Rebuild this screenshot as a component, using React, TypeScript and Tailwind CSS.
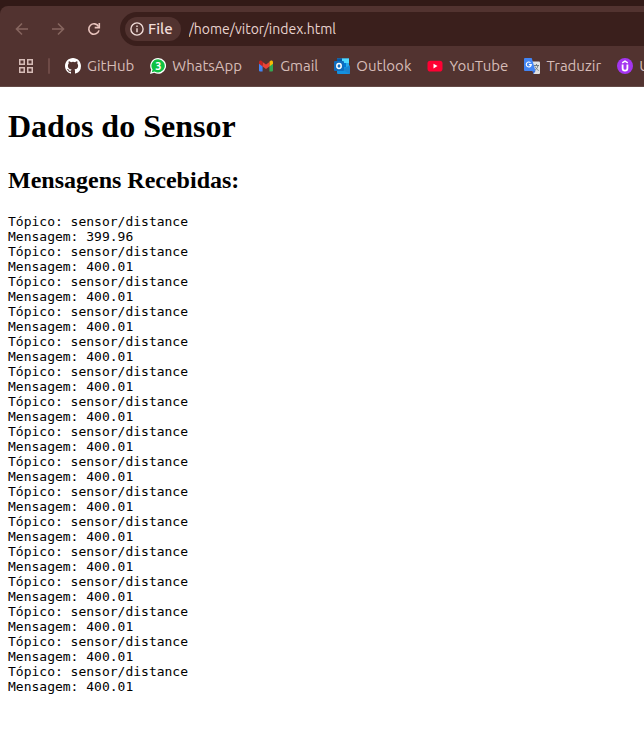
import type { ReactNode } from "react";

const readings = [
  "399.96",
  ...Array.from({ length: 15 }, () => "400.01"),
];

const log = readings
  .map((value) => `Tópico: sensor/distance\nMensagem: ${value}`)
  .join("\n");

function BackIcon() {
  return (
    <svg viewBox="0 0 16 16" className="size-4" fill="none" stroke="currentColor" strokeWidth="1.6" aria-hidden="true">
      <path d="M14 8H3M8 2.5 2.5 8 8 13.5" />
    </svg>
  );
}

function ForwardIcon() {
  return (
    <svg viewBox="0 0 16 16" className="size-4" fill="none" stroke="currentColor" strokeWidth="1.6" aria-hidden="true">
      <path d="M2 8h11M8 2.5 13.5 8 8 13.5" />
    </svg>
  );
}

function ReloadIcon() {
  return (
    <svg viewBox="0 0 16 16" className="size-4" fill="none" stroke="currentColor" strokeWidth="1.6" aria-hidden="true">
      <path d="M12.6 5.6A5.2 5.2 0 1 0 13 9.4" />
      <path d="M13.3 2v4.6H8.7" />
    </svg>
  );
}

function InfoIcon() {
  return (
    <svg viewBox="0 0 14 14" className="size-3.5" fill="none" stroke="currentColor" strokeWidth="1.4" aria-hidden="true">
      <circle cx="7" cy="7" r="6.1" />
      <path d="M7 6.2v4M7 3.6v1.5" />
    </svg>
  );
}

function AppsIcon() {
  return (
    <svg viewBox="0 0 14 14" className="size-3.5" fill="none" stroke="currentColor" strokeWidth="1.5" aria-hidden="true">
      <path d="M.75.75h4.5v4.5H.75zM8.75.75h4.5v4.5h-4.5zM.75 8.75h4.5v4.5H.75zM8.75 8.75h4.5v4.5h-4.5z" />
    </svg>
  );
}

function GitHubIcon() {
  return (
    <svg viewBox="0 0 16 16" className="size-4 shrink-0" fill="#ffffff" aria-hidden="true">
      <path d="M8 0C3.58 0 0 3.58 0 8c0 3.54 2.29 6.53 5.47 7.59.4.07.55-.17.55-.38 0-.19-.01-.82-.01-1.49-2.01.37-2.53-.49-2.69-.94-.09-.23-.48-.94-.82-1.13-.28-.15-.68-.52-.01-.53.63-.01 1.08.58 1.23.82.72 1.21 1.87.87 2.33.66.07-.52.28-.87.51-1.07-1.78-.2-3.64-.89-3.64-3.95 0-.87.31-1.59.82-2.15-.08-.2-.36-1.02.08-2.12 0 0 .67-.21 2.2.82a7.5 7.5 0 0 1 4 0c1.53-1.04 2.2-.82 2.2-.82.44 1.1.16 1.92.08 2.12.51.56.82 1.27.82 2.15 0 3.07-1.87 3.75-3.65 3.95.29.25.54.73.54 1.48 0 1.07-.01 1.93-.01 2.2 0 .21.15.46.55.38A8.01 8.01 0 0 0 16 8c0-4.42-3.58-8-8-8z" />
    </svg>
  );
}

function WhatsAppIcon() {
  return (
    <span className="relative flex size-4 shrink-0 items-center justify-center">
      <svg viewBox="0 0 16 16" className="absolute inset-0 size-4" aria-hidden="true">
        <path d="M8.1 0a7.9 7.9 0 1 1-3.8 14.8L0 16l1.2-4.2A7.9 7.9 0 0 1 8.1 0z" fill="#ffffff" />
        <path d="M8.1 1.3a6.6 6.6 0 1 1-3.6 12.1l-2.7.8.8-2.6A6.6 6.6 0 0 1 8.1 1.3z" fill="#0fc143" />
      </svg>
      <span className="relative text-[11px] leading-4 font-bold text-white">3</span>
    </span>
  );
}

function GmailIcon() {
  return (
    <svg viewBox="0 0 16 16" className="size-4 shrink-0" aria-hidden="true">
      <path d="M1 4.5 4.6 7v6.5H2.1A1.1 1.1 0 0 1 1 12.4z" fill="#4285f4" />
      <path d="M15 4.5 11.4 7v6.5h2.5a1.1 1.1 0 0 0 1.1-1.1z" fill="#34a853" />
      <path d="M11.4 3.7v4.8L15 5.8V4.2c0-1.5-1.6-2.2-2.7-1.3z" fill="#fbbc04" />
      <path d="M4.6 8.5V3.9L8 6.4l3.4-2.5v4.6L8 11z" fill="#ea4335" />
      <path d="M1 4.2v1.6l3.6 2.7V3.8l-.9-.9C2.6 2.1 1 2.7 1 4.2z" fill="#c5221f" />
    </svg>
  );
}

function OutlookIcon() {
  return (
    <svg viewBox="0 0 16 16" className="size-4 shrink-0" aria-hidden="true">
      <path d="M3 .5h12v8.5H3z" fill="#28a8ea" />
      <path d="M8 .5h7V5H8z" fill="#50d9ff" />
      <path d="M8 5h4v4H8z" fill="#0078d4" />
      <path d="M3 .5h5V5H3z" fill="#0358a7" />
      <path d="M3 9h9l4-1.5V15a1 1 0 0 1-1 1H4a1 1 0 0 1-1-1z" fill="#1490df" />
      <path d="m16 7.5-7 4.2L15.5 16 16 15z" fill="#1b84d0" />
      <rect x="0" y="3" width="10" height="10" rx="1" fill="#0f6cbd" />
      <ellipse cx="5" cy="8" rx="2.2" ry="2.4" fill="none" stroke="#ffffff" strokeWidth="1.5" />
    </svg>
  );
}

function YouTubeIcon() {
  return (
    <svg viewBox="0 0 16 16" className="size-4 shrink-0" aria-hidden="true">
      <rect x=".5" y="2.7" width="15" height="10.8" rx="2.8" fill="#ff0033" />
      <path d="M6.5 5.8v4.6l4-2.3z" fill="#ffffff" />
    </svg>
  );
}

function TranslateIcon() {
  return (
    <svg viewBox="0 0 16 16" className="size-4 shrink-0" aria-hidden="true">
      <path d="M6 3.5h9a1 1 0 0 1 1 1V15a1 1 0 0 1-1 1H9.5z" fill="#e1e1e1" />
      <path d="M10 7.5h5M12.5 6v1.5M14 7.5c-.5 2.5-2 4-3.5 5M11 8.5c.5 1.5 2 3 3.7 4" fill="none" stroke="#6f7c84" strokeWidth="1" />
      <path d="m8.5 13 3 0-2 3z" fill="#3367d6" />
      <path d="M1 0h6.7L11.5 13H1a1 1 0 0 1-1-1V1a1 1 0 0 1 1-1z" fill="#4285f4" />
      <path d="M6.5 4.6A2.5 2.5 0 1 0 7.3 6.6H4.9" fill="none" stroke="#ffffff" strokeWidth="1.1" />
    </svg>
  );
}

function UdemyIcon() {
  return (
    <svg viewBox="0 0 16 16" className="size-4 shrink-0" aria-hidden="true">
      <circle cx="8" cy="8" r="8" fill="#a435f0" />
      <path d="M5.2 4.8 8 3.1l2.8 1.7" fill="none" stroke="#ffffff" strokeWidth="1.5" />
      <path d="M5.6 6.5v3.8c0 1.5 1 2.4 2.4 2.4s2.4-.9 2.4-2.4V6.5" fill="none" stroke="#ffffff" strokeWidth="1.8" />
    </svg>
  );
}

const bookmarks: { label: string; href: string; icon: ReactNode }[] = [
  { label: "GitHub", href: "#github", icon: <GitHubIcon /> },
  { label: "WhatsApp", href: "#whatsapp", icon: <WhatsAppIcon /> },
  { label: "Gmail", href: "#gmail", icon: <GmailIcon /> },
  { label: "Outlook", href: "#outlook", icon: <OutlookIcon /> },
  { label: "YouTube", href: "#youtube", icon: <YouTubeIcon /> },
  { label: "Traduzir", href: "#traduzir", icon: <TranslateIcon /> },
  { label: "Udemy", href: "#udemy", icon: <UdemyIcon /> },
];

function Toolbar() {
  return (
    <div className="flex items-center pt-1.5 pl-3.5">
      <div className="flex items-center gap-5 text-[#86655f]">
        <button type="button" aria-label="Voltar" className="block">
          <BackIcon />
        </button>
        <button type="button" aria-label="Avançar" className="block">
          <ForwardIcon />
        </button>
        <button type="button" aria-label="Recarregar" className="block text-[#e9c4bd]">
          <ReloadIcon />
        </button>
      </div>
      <div className="ml-[18px] flex h-[34px] min-w-0 flex-1 items-center gap-2 rounded-l-full bg-[#3a1f1c] pl-[5px]">
        <button
          type="button"
          className="flex h-6 items-center gap-1 rounded-full bg-[#523330] pr-2 pl-[5px] text-[15px] font-medium text-[#f0dcd8]"
        >
          <InfoIcon />
          File
        </button>
        <input
          type="text"
          aria-label="Endereço"
          defaultValue="/home/vitor/index.html"
          className="min-w-0 flex-1 bg-transparent text-sm text-[#e8d3cf] outline-none"
        />
      </div>
    </div>
  );
}

function BookmarksBar() {
  return (
    <nav aria-label="Favoritos" className="flex h-10 items-center overflow-hidden pl-[19px] text-[15px] text-[#d6bcb7]">
      <button type="button" aria-label="Aplicativos" className="block shrink-0">
        <AppsIcon />
      </button>
      <div className="mx-[15px] h-4 w-0.5 shrink-0 rounded-full bg-[#6e4a46]" />
      <ul className="flex items-center gap-4">
        {bookmarks.map(({ label, href, icon }) => (
          <li key={label} className="shrink-0">
            <a href={href} className="flex items-center gap-1.5">
              {icon}
              {label}
            </a>
          </li>
        ))}
      </ul>
    </nav>
  );
}

export default function App() {
  return (
    <div className="min-h-screen bg-white text-black">
      <header className="bg-[#321a17] pt-1.5 font-['Ubuntu','Noto_Sans',sans-serif]">
        <div className="rounded-tl-lg border-b border-[#644a46] bg-[#523330]">
          <Toolbar />
          <BookmarksBar />
        </div>
      </header>
      <main className="px-2 pt-[21px] pb-4 font-['Liberation_Serif',serif]">
        <h1 className="text-[32px] leading-[37px] font-bold">Dados do Sensor</h1>
        <h2 className="mt-[22px] text-2xl leading-[27px] font-bold">Mensagens Recebidas:</h2>
        <pre className="mt-5 font-['DejaVu_Sans_Mono',monospace] text-[13px] leading-[15px]">{log}</pre>
      </main>
    </div>
  );
}
